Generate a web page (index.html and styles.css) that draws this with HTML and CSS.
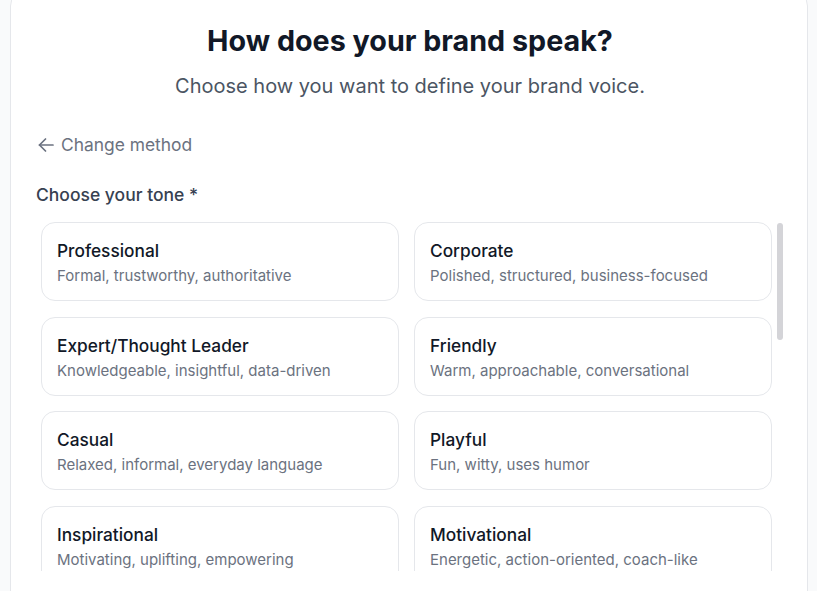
FILE: index.html
```html
<!DOCTYPE html>
<html lang="en">
<head>
<meta charset="utf-8">
<title>How does your brand speak?</title>
<link rel="stylesheet" href="styles.css">
</head>
<body>
<main class="panel">
  <h1 class="title">How does your brand speak?</h1>
  <p class="subtitle">Choose how you want to define your brand voice.</p>
  <button class="back" type="button">
    <svg class="back-icon" viewBox="0 0 16 14" width="16" height="14" fill="none" stroke="currentColor" stroke-width="1.7" stroke-linecap="round" stroke-linejoin="round"><path d="M15 7H1.5"/><path d="M7.5 1L1.5 7l6 6"/></svg>
    <span>Change method</span>
  </button>
  <div class="label">Choose your tone *</div>
  <div class="scroll">
    <div class="tones">
      <div class="tone"><div class="tone-name">Professional</div><div class="tone-desc">Formal, trustworthy, authoritative</div></div>
      <div class="tone"><div class="tone-name">Corporate</div><div class="tone-desc">Polished, structured, business-focused</div></div>
      <div class="tone"><div class="tone-name">Expert/Thought Leader</div><div class="tone-desc">Knowledgeable, insightful, data-driven</div></div>
      <div class="tone"><div class="tone-name">Friendly</div><div class="tone-desc">Warm, approachable, conversational</div></div>
      <div class="tone"><div class="tone-name">Casual</div><div class="tone-desc">Relaxed, informal, everyday language</div></div>
      <div class="tone"><div class="tone-name">Playful</div><div class="tone-desc">Fun, witty, uses humor</div></div>
      <div class="tone"><div class="tone-name">Inspirational</div><div class="tone-desc">Motivating, uplifting, empowering</div></div>
      <div class="tone"><div class="tone-name">Motivational</div><div class="tone-desc">Energetic, action-oriented, coach-like</div></div>
    </div>
    <div class="track" aria-hidden="true"><div class="thumb"></div></div>
  </div>
</main>
</body>
</html>
```
FILE: styles.css
```css
* { box-sizing: border-box; }
html, body { margin: 0; padding: 0; }
body {
  background: #f9fafb;
  font-family: Inter, "Noto Sans", "Liberation Sans", sans-serif;
  color: #111827;
  height: 591px;
  overflow: hidden;
}
.panel {
  margin: -10px 9px 0 10px;
  background: #fff;
  border: 1px solid #e5e7eb;
  border-radius: 16px;
  padding: 32px 23px 40px 25px;
  display: flex;
  flex-direction: column;
}
.title {
  margin: 0;
  text-align: center;
  font-size: 28.7px;
  line-height: 36px;
  font-weight: 700;
  color: #111827;
}
.subtitle {
  margin: 13px 0 0;
  text-align: center;
  font-size: 20px;
  line-height: 28px;
  color: #4b5563;
}
.back {
  margin-top: 33px;
  align-self: flex-start;
  display: flex;
  align-items: center;
  gap: 7px;
  padding: 0 0 0 2px;
  border: 0;
  background: none;
  font: inherit;
  font-size: 17.4px;
  line-height: 24px;
  color: #6b7280;
  cursor: pointer;
}
.back-icon { flex: none; }
.label {
  margin-top: 26px;
  font-size: 17.5px;
  line-height: 24px;
  font-weight: 500;
  color: #374151;
}
.scroll {
  margin-top: 15px;
  height: 349px;
  display: flex;
  gap: 4px;
}
.tones {
  flex: 1;
  overflow: hidden;
  padding: 0 0 0 5px;
  display: grid;
  grid-template-columns: 1fr 1fr;
  grid-auto-rows: 79px;
  column-gap: 15px;
  row-gap: 15.5px;
  align-content: start;
}
.track {
  flex: none;
  width: 8px;
  padding: 1px 1px 0;
}
.thumb {
  height: 117px;
  border-radius: 3px;
  background: #d4d4d8;
}
.tone {
  border: 1px solid #e5e7eb;
  border-radius: 14px;
  padding: 16px 15px;
  background: #fff;
}
.tone-name {
  font-size: 17.3px;
  line-height: 24px;
  font-weight: 500;
  color: #111827;
}
.tone-desc {
  margin-top: 3px;
  font-size: 15px;
  line-height: 20px;
  color: #6b7280;
}
```
